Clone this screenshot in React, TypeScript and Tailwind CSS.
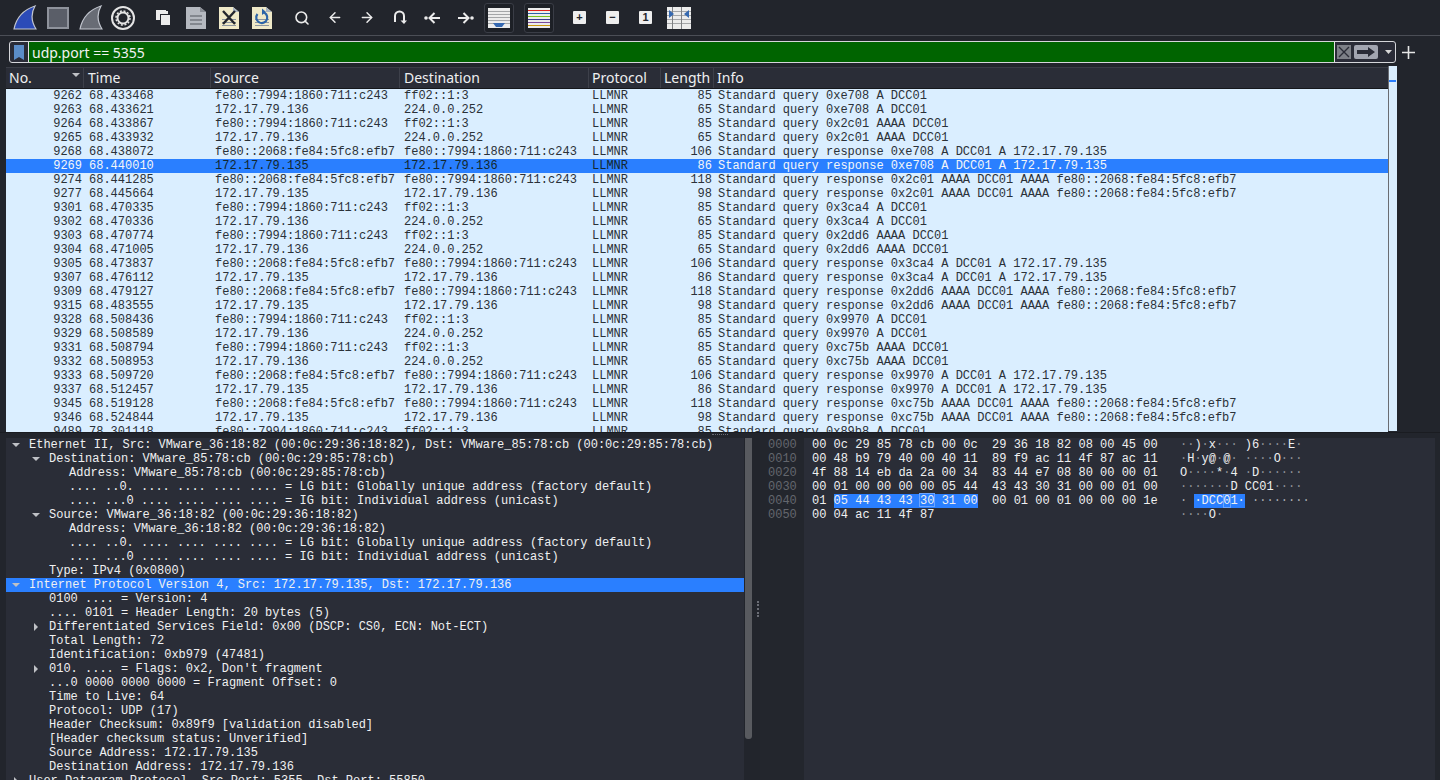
import { ArrowLeft, ArrowRight, Search } from 'lucide-react';

const mono = "font-['Liberation_Mono',monospace]";

const rows = [
  ['9262', '68.433468', 'a', '85', 'Standard query 0xe708 A DCC01'],
  ['9263', '68.433621', 'b', '65', 'Standard query 0xe708 A DCC01'],
  ['9264', '68.433867', 'a', '85', 'Standard query 0x2c01 AAAA DCC01'],
  ['9265', '68.433932', 'b', '65', 'Standard query 0x2c01 AAAA DCC01'],
  ['9268', '68.438072', 'c', '106', 'Standard query response 0xe708 A DCC01 A 172.17.79.135'],
  ['9269', '68.440010', 'd', '86', 'Standard query response 0xe708 A DCC01 A 172.17.79.135'],
  ['9274', '68.441285', 'c', '118', 'Standard query response 0x2c01 AAAA DCC01 AAAA fe80::2068:fe84:5fc8:efb7'],
  ['9277', '68.445664', 'd', '98', 'Standard query response 0x2c01 AAAA DCC01 AAAA fe80::2068:fe84:5fc8:efb7'],
  ['9301', '68.470335', 'a', '85', 'Standard query 0x3ca4 A DCC01'],
  ['9302', '68.470336', 'b', '65', 'Standard query 0x3ca4 A DCC01'],
  ['9303', '68.470774', 'a', '85', 'Standard query 0x2dd6 AAAA DCC01'],
  ['9304', '68.471005', 'b', '65', 'Standard query 0x2dd6 AAAA DCC01'],
  ['9305', '68.473837', 'c', '106', 'Standard query response 0x3ca4 A DCC01 A 172.17.79.135'],
  ['9307', '68.476112', 'd', '86', 'Standard query response 0x3ca4 A DCC01 A 172.17.79.135'],
  ['9309', '68.479127', 'c', '118', 'Standard query response 0x2dd6 AAAA DCC01 AAAA fe80::2068:fe84:5fc8:efb7'],
  ['9315', '68.483555', 'd', '98', 'Standard query response 0x2dd6 AAAA DCC01 AAAA fe80::2068:fe84:5fc8:efb7'],
  ['9328', '68.508436', 'a', '85', 'Standard query 0x9970 A DCC01'],
  ['9329', '68.508589', 'b', '65', 'Standard query 0x9970 A DCC01'],
  ['9331', '68.508794', 'a', '85', 'Standard query 0xc75b AAAA DCC01'],
  ['9332', '68.508953', 'b', '65', 'Standard query 0xc75b AAAA DCC01'],
  ['9333', '68.509720', 'c', '106', 'Standard query response 0x9970 A DCC01 A 172.17.79.135'],
  ['9337', '68.512457', 'd', '86', 'Standard query response 0x9970 A DCC01 A 172.17.79.135'],
  ['9345', '68.519128', 'c', '118', 'Standard query response 0xc75b AAAA DCC01 AAAA fe80::2068:fe84:5fc8:efb7'],
  ['9346', '68.524844', 'd', '98', 'Standard query response 0xc75b AAAA DCC01 AAAA fe80::2068:fe84:5fc8:efb7'],
  ['9489', '78.301118', 'a', '85', 'Standard query 0x89b8 A DCC01'],
];

const endpoints: Record<string, [string, string]> = {
  a: ['fe80::7994:1860:711:c243', 'ff02::1:3'],
  b: ['172.17.79.136', '224.0.0.252'],
  c: ['fe80::2068:fe84:5fc8:efb7', 'fe80::7994:1860:711:c243'],
  d: ['172.17.79.135', '172.17.79.136'],
};

// level: indent, arrow: d = open, r = closed
const details: { text: string; level: number; arrow?: 'd' | 'r'; selected?: boolean }[] = [
  { text: 'Ethernet II, Src: VMware_36:18:82 (00:0c:29:36:18:82), Dst: VMware_85:78:cb (00:0c:29:85:78:cb)', level: 0, arrow: 'd' },
  { text: 'Destination: VMware_85:78:cb (00:0c:29:85:78:cb)', level: 1, arrow: 'd' },
  { text: 'Address: VMware_85:78:cb (00:0c:29:85:78:cb)', level: 2 },
  { text: '.... ..0. .... .... .... .... = LG bit: Globally unique address (factory default)', level: 2 },
  { text: '.... ...0 .... .... .... .... = IG bit: Individual address (unicast)', level: 2 },
  { text: 'Source: VMware_36:18:82 (00:0c:29:36:18:82)', level: 1, arrow: 'd' },
  { text: 'Address: VMware_36:18:82 (00:0c:29:36:18:82)', level: 2 },
  { text: '.... ..0. .... .... .... .... = LG bit: Globally unique address (factory default)', level: 2 },
  { text: '.... ...0 .... .... .... .... = IG bit: Individual address (unicast)', level: 2 },
  { text: 'Type: IPv4 (0x0800)', level: 1 },
  { text: 'Internet Protocol Version 4, Src: 172.17.79.135, Dst: 172.17.79.136', level: 0, arrow: 'd', selected: true },
  { text: '0100 .... = Version: 4', level: 1 },
  { text: '.... 0101 = Header Length: 20 bytes (5)', level: 1 },
  { text: 'Differentiated Services Field: 0x00 (DSCP: CS0, ECN: Not-ECT)', level: 1, arrow: 'r' },
  { text: 'Total Length: 72', level: 1 },
  { text: 'Identification: 0xb979 (47481)', level: 1 },
  { text: "010. .... = Flags: 0x2, Don't fragment", level: 1, arrow: 'r' },
  { text: '...0 0000 0000 0000 = Fragment Offset: 0', level: 1 },
  { text: 'Time to Live: 64', level: 1 },
  { text: 'Protocol: UDP (17)', level: 1 },
  { text: 'Header Checksum: 0x89f9 [validation disabled]', level: 1 },
  { text: '[Header checksum status: Unverified]', level: 1 },
  { text: 'Source Address: 172.17.79.135', level: 1 },
  { text: 'Destination Address: 172.17.79.136', level: 1 },
  { text: 'User Datagram Protocol, Src Port: 5355, Dst Port: 55850', level: 0, arrow: 'r' },
];

const hexRows = [
  ['0000', '00 0c 29 85 78 cb 00 0c  29 36 18 82 08 00 45 00', '··)·x··· )6····E·'],
  ['0010', '00 48 b9 79 40 00 40 11  89 f9 ac 11 4f 87 ac 11', '·H·y@·@· ····O···'],
  ['0020', '4f 88 14 eb da 2a 00 34  83 44 e7 08 80 00 00 01', 'O····*·4 ·D······'],
  ['0030', '00 01 00 00 00 00 05 44  43 43 30 31 00 00 01 00', '·······D CC01····'],
  ['0050', '00 04 ac 11 4f 87', '····O·'],
];

function Fin({ color }: { color: string }) {
  return (
    <svg width="24" height="26" viewBox="0 0 24 26">
      <path d="M1 24 C3 14 10 5 22 1 C18 8 18 16 23 24 Z" fill={color} stroke="#c3c7d0" strokeWidth="1.2" />
    </svg>
  );
}

function Gear() {
  return (
    <svg width="24" height="24" viewBox="0 0 24 24" fill="none">
      <circle cx="12" cy="12" r="11" stroke="#e4e4e4" strokeWidth="2" />
      <circle cx="12" cy="12" r="5.5" stroke="#e4e4e4" strokeWidth="2" />
      <circle cx="12" cy="12" r="7" stroke="#e4e4e4" strokeWidth="1.5" strokeDasharray="2 1.7" />
    </svg>
  );
}

function PaperFile({ children }: { children?: React.ReactNode }) {
  return (
    <svg width="20" height="24" viewBox="0 0 20 24">
      <path d="M0 1 H14 L20 6 V23 H0 Z" fill="#efe9c8" />
      <path d="M14 1 L20 6 H14 Z" fill="#a9b4c0" />
      <g fill="#8d96a0">
        <rect x="3" y="13" width="14" height="1" />
        <rect x="3" y="16" width="14" height="1" />
        <rect x="3" y="19" width="14" height="1" />
      </g>
      {children}
    </svg>
  );
}

function Tool({ children, className = '' }: { children: React.ReactNode; className?: string }) {
  return <div className={`flex h-[30px] shrink-0 items-center justify-center ${className}`}>{children}</div>;
}

function Toolbar() {
  return (
    <div className="flex h-[36px] items-center border-b border-[#4b4e56] pl-[13px] pr-2">
      <Tool className="w-[24px]"><Fin color="#2c4bb8" /></Tool>
      <Tool className="ml-[9px] w-[24px]">
        <div className="h-[22px] w-[22px] border-2 border-[#8f939c] bg-[#5a5e68]" />
      </Tool>
      <Tool className="ml-[9px] w-[24px]"><Fin color="#686c75" /></Tool>
      <Tool className="ml-[8px] w-[24px]"><Gear /></Tool>
      <Tool className="ml-[21px] w-[14px]">
        <svg width="14" height="15" viewBox="0 0 14 15">
          <path d="M0 0 H10 V4 H4 V10 H0 Z" fill="#ececec" />
          <rect x="5" y="5" width="9" height="10" fill="#ececec" />
          <rect x="10" y="1" width="2" height="3" fill="#ececec" />
        </svg>
      </Tool>
      <Tool className="ml-[16px] w-[20px]">
        <svg width="20" height="24" viewBox="0 0 20 24">
          <path d="M0 1 H14 L20 6 V23 H0 Z" fill="#b4b8bf" />
          <path d="M14 1 L20 6 H14 Z" fill="#8a8e95" />
          <g fill="#83878e">
            <rect x="4" y="9" width="12" height="2" />
            <rect x="4" y="13" width="12" height="2" />
            <rect x="4" y="17" width="12" height="2" />
          </g>
        </svg>
      </Tool>
      <Tool className="ml-[13px] w-[20px]">
        <PaperFile><path d="M4 5 L16 18 M16 5 L4 18" stroke="#23262d" strokeWidth="2.4" /></PaperFile>
      </Tool>
      <Tool className="ml-[13px] w-[20px]">
        <PaperFile>
          <path d="M5.5 8 A5.5 5.5 0 1 0 10 6" stroke="#2c64a8" strokeWidth="2.2" fill="none" />
          <path d="M10 2.5 L14 6 L10 9 Z" fill="#2c64a8" />
        </PaperFile>
      </Tool>
      <Tool className="ml-[22px] w-[16px]"><Search size={16} strokeWidth={2.4} color="#ececec" /></Tool>
      <Tool className="ml-[17px] w-[16px]"><ArrowLeft size={17} strokeWidth={2.2} color="#ececec" /></Tool>
      <Tool className="ml-[16px] w-[16px]"><ArrowRight size={17} strokeWidth={2.2} color="#ececec" /></Tool>
      <Tool className="ml-[18px] w-[14px]">
        <svg width="14" height="16" viewBox="0 0 14 16" fill="none">
          <path d="M2 12 V6 A4.5 4.5 0 0 1 11 6 V11" stroke="#ececec" strokeWidth="2" />
          <path d="M7.5 10.5 H14 L11 14 Z" fill="#ececec" />
        </svg>
      </Tool>
      <Tool className="ml-[17px] w-[17px]">
        <svg width="17" height="14" viewBox="0 0 17 14" fill="none">
          <circle cx="2" cy="7" r="1.8" fill="#ececec" />
          <path d="M16 7 H6 M10.5 2 L5.5 7 L10.5 12" stroke="#ececec" strokeWidth="2" />
        </svg>
      </Tool>
      <Tool className="ml-[16px] w-[17px]">
        <svg width="17" height="14" viewBox="0 0 17 14" fill="none">
          <circle cx="15" cy="7" r="1.8" fill="#ececec" />
          <path d="M1 7 H11 M6.5 2 L11.5 7 L6.5 12" stroke="#ececec" strokeWidth="2" />
        </svg>
      </Tool>
      <Tool className="ml-[10px] w-[30px] rounded-[3px] border border-[#3a3d46] bg-[#1d2026]">
        <svg width="22" height="20" viewBox="0 0 22 20">
          <rect width="22" height="20" fill="#ececec" />
          <g fill="#a4a6a8">
            <rect y="3" width="22" height="1" />
            <rect y="6" width="22" height="1" />
            <rect y="9" width="22" height="1" />
            <rect y="12" width="22" height="1" />
            <rect y="15" width="22" height="1" />
          </g>
          <path d="M5 15 H17 L14 19 H8 Z" fill="#3568b0" />
        </svg>
      </Tool>
      <Tool className="ml-[10px] w-[30px] rounded-[3px] border border-[#3a3d46] bg-[#1d2026]">
        <svg width="22" height="20" viewBox="0 0 22 20">
          <rect width="22" height="20" fill="#ececec" />
          <rect y="2" width="22" height="1" fill="#e0201c" />
          <rect y="5" width="22" height="1" fill="#2c5fa8" />
          <rect y="8" width="22" height="1" fill="#78c01c" />
          <rect y="11" width="22" height="1" fill="#3a3a8c" />
          <rect y="14" width="22" height="1" fill="#7a4a9c" />
          <rect y="17" width="22" height="1" fill="#c8980c" />
        </svg>
      </Tool>
      <Tool className="ml-[19px] w-[13px]"><Box glyph="+" /></Tool>
      <Tool className="ml-[20px] w-[13px]"><Box glyph="−" /></Tool>
      <Tool className="ml-[20px] w-[13px]"><Box glyph="1" /></Tool>
      <Tool className="ml-[15px] w-[24px]">
        <svg width="24" height="22" viewBox="0 0 24 22">
          <rect width="24" height="22" fill="#ececec" />
          <g fill="#a4a6a8">
            <rect y="4" width="24" height="1" />
            <rect y="8" width="24" height="1" />
            <rect y="12" width="24" height="1" />
            <rect y="16" width="24" height="1" />
          </g>
          <rect x="5" width="1" height="22" fill="#7f8184" />
          <rect x="14" width="1" height="22" fill="#7f8184" />
          <path d="M2 3 L7 7 L2 11 Z M22 3 L17 7 L22 11 Z" fill="#3568b0" />
        </svg>
      </Tool>
    </div>
  );
}

function Box({ glyph }: { glyph: string }) {
  return (
    <div className="flex h-[13px] w-[13px] items-center justify-center rounded-[1px] bg-[#eeeeee] font-['Liberation_Sans',sans-serif] text-[11px] font-bold leading-none text-[#23262d]">
      {glyph}
    </div>
  );
}

function FilterBar() {
  return (
    <div className="flex h-[31px] items-center pl-[9px] pr-[1px] pt-[1px]">
      <div className="flex h-[22px] w-[1387px] items-stretch overflow-hidden rounded-[3px] border border-[#d5d6da] bg-[#2a2c37]">
        <div className="flex w-[18px] shrink-0 items-center justify-center">
          <svg width="10" height="15" viewBox="0 0 10 15"><path d="M0 0 H10 V15 L5 12 L0 15 Z" fill="#5b8dc8" /></svg>
        </div>
        <div className="flex flex-1 items-center border-x border-[#e4e4e4] bg-[#006400] pl-[3px] font-['Noto_Sans',sans-serif] text-[14px] text-[#f2f2f2]">
          udp.port == 5355
        </div>
        <div className="flex w-[60px] shrink-0 items-center gap-[3px] pl-[2px]">
          <div className="flex h-[14px] w-[14px] items-center justify-center bg-[#7d8087]">
            <svg width="12" height="12" viewBox="0 0 12 12"><path d="M1 1 L11 11 M11 1 L1 11" stroke="#2a2c37" strokeWidth="1.4" /></svg>
          </div>
          <div className="flex h-[14px] w-[24px] items-center justify-center rounded-[2px] bg-[#a2a5b0]">
            <svg width="18" height="10" viewBox="0 0 18 10"><path d="M0 3 H11 V0 L18 5 L11 10 V7 H0 Z" fill="#2a2c37" /></svg>
          </div>
          <svg className="ml-[4px]" width="7" height="4" viewBox="0 0 7 4"><path d="M0 0 H7 L3.5 4 Z" fill="#d8d8d8" /></svg>
        </div>
      </div>
      <div className="ml-[6px] flex w-[13px] items-center justify-center">
        <svg width="13" height="13" viewBox="0 0 13 13"><path d="M6.5 0 V13 M0 6.5 H13" stroke="#e6e6e6" strokeWidth="1.6" /></svg>
      </div>
    </div>
  );
}

const colClass = ['w-[78px]', 'w-[127px]', 'w-[189px]', 'w-[189px]', 'w-[72px]', 'w-[53px]'];

function PacketList() {
  return (
    <div className="flex h-[366px] border-b border-[#1a1c21] pl-[6px] pr-[5px]">
      <div className="w-[1382px] shrink-0 overflow-hidden">
        <div className="flex h-[22px] items-center border-y border-t-[#3a3d46] border-b-[#16181c] bg-[#2a2d37] font-['Noto_Sans',sans-serif] text-[14px] leading-[20px] text-[#eff0f1]">
          <div className={`${colClass[0]} relative h-full border-r border-[#3d404a] pl-[3px]`}>
            No.
            <svg className="absolute right-[3px] top-[5px]" width="8" height="4" viewBox="0 0 8 4"><path d="M0 0 H8 L4 4 Z" fill="#bfc1c6" /></svg>
          </div>
          <div className={`${colClass[1]} h-full border-r border-[#3d404a] pl-[4px]`}>Time</div>
          <div className={`${colClass[2]} h-full border-r border-[#3d404a] pl-[3px]`}>Source</div>
          <div className={`${colClass[3]} h-full border-r border-[#3d404a] pl-[4px]`}>Destination</div>
          <div className={`${colClass[4]} h-full border-r border-[#3d404a] pl-[3px]`}>Protocol</div>
          <div className={`${colClass[5]} h-full border-r border-[#3d404a] pl-[3px]`}>Length</div>
          <div className="h-full flex-1 pl-[3px]">Info</div>
        </div>
        <div className={`${mono} bg-[#daeeff] text-[12px] leading-[14px] text-[#2a3138]`}>
          {rows.map((r) => {
            const selected = r[0] === '9269';
            const [src, dst] = endpoints[r[2]];
            return (
              <div key={r[0]} className={`flex h-[14px] whitespace-pre ${selected ? 'bg-[#2a7fff] text-[#f4f6f8]' : ''}`}>
                <div className="w-[76px] shrink-0 text-right">{r[0]}</div>
                <div className="w-[126px] shrink-0 pl-[7px]">{r[1]}</div>
                <div className={`w-[189px] shrink-0 pl-[7px] ${selected ? 'text-[#12272e]' : ''}`}>{src}</div>
                <div className={`w-[189px] shrink-0 pl-[7px] ${selected ? 'text-[#12272e]' : ''}`}>{dst}</div>
                <div className={`w-[74px] shrink-0 pl-[6px] ${selected ? 'text-[#12272e]' : ''}`}>LLMNR</div>
                <div className="w-[52px] shrink-0 text-right">{r[3]}</div>
                <div className="pl-[6px]">{r[4]}</div>
              </div>
            );
          })}
        </div>
      </div>
      <div className="relative mb-[1px] mt-[-1px] w-[9px] shrink-0 border-x border-x-[#6a6c72] border-r-transparent bg-[#daeeff]">
        <div className="absolute left-0 right-0 top-[14px] h-[2px] bg-[#2a7fff]" />
      </div>
    </div>
  );
}

function DetailsPane() {
  return (
    <div className="flex w-[745px] shrink-0 overflow-hidden pl-[6px]">
      <div className={`${mono} w-[738px] shrink-0 bg-[#2a2d37] text-[12px] leading-[14px] text-[#eff0f1]`}>
        {details.map((d, i) => (
          <div
            key={i}
            className={`flex h-[14px] items-center whitespace-pre ${d.selected ? 'bg-[#2a7fff]' : ''}`}
          >
            <span className={`flex w-[10px] shrink-0 items-center justify-center ${d.level === 0 ? 'ml-[5px]' : 'ml-[25px]'}`}>
              {d.arrow === 'd' && <svg width="8" height="4" viewBox="0 0 8 4"><path d="M0 0 H8 L4 4 Z" fill="#bfc1c6" /></svg>}
              {d.arrow === 'r' && <svg width="4" height="8" viewBox="0 0 4 8"><path d="M0 0 V8 L4 4 Z" fill="#bfc1c6" /></svg>}
            </span>
            <span className={d.level === 0 ? 'ml-[8px]' : d.level === 1 ? 'ml-[8px]' : 'ml-[28px]'}>{d.text}</span>
          </div>
        ))}
      </div>
    </div>
  );
}

function BytesPane() {
  return (
    <div className={`${mono} flex min-w-0 flex-1 text-[12px] leading-[14px] text-[#eff0f1]`}>
      <div className="w-[44px] shrink-0 bg-[#23262d] pl-[8px] text-[#63666d]">
        {['0000', '0010', '0020', '0030', '0040', '0050'].map((o) => <div key={o} className="h-[14px]">{o}</div>)}
      </div>
      <div className="min-w-0 flex-1 bg-[#2a2d37] pl-[8px]">
        {hexRows.slice(0, 4).map((h) => <HexLine key={h[0]} hex={h[1]} ascii={h[2]} />)}
        <div className="flex h-[14px] whitespace-pre">
          <span className="w-[368px] shrink-0">
            01 <span className="relative bg-[#2a7fff]">05 44 43 43 <span className="relative">30<span className="absolute left-[-1px] top-[-1px] h-[14px] w-[16px] border border-[#6ca5ff]" /></span> 31 00</span>  00 01 00 01 00 00 00 1e
          </span>
          <span className="text-[#a9acb2]">
            · <span className="bg-[#2a7fff] text-[#eff0f1]">·DCC<span className="relative">0<span className="absolute left-0 top-0 h-[14px] w-[8px] border border-[#6ca5ff]" /></span>1·</span> ········
          </span>
        </div>
        <HexLine hex={hexRows[4][1]} ascii={hexRows[4][2]} />
      </div>
    </div>
  );
}

function HexLine({ hex, ascii }: { hex: string; ascii: string }) {
  return (
    <div className="flex h-[14px] whitespace-pre">
      <span className="w-[368px] shrink-0">{hex}</span>
      <span>
        {ascii.split('').map((c, i) => (
          <span key={i} className={c === '·' ? 'text-[#8d9096]' : ''}>{c}</span>
        ))}
      </span>
    </div>
  );
}

export default function App() {
  return (
    <div className="h-[780px] w-[1440px] overflow-hidden bg-[#22252c]">
      <Toolbar />
      <FilterBar />
      <PacketList />
      <div className="flex h-[4px] items-center justify-center">
        <div className="h-[2px] w-[16px] border-t border-dotted border-[#6a6d75]" />
      </div>
      <div className="flex h-[343px] pr-[5px] pt-[1px]">
        <DetailsPane />
        <div className="mr-[4px] w-[7px] shrink-0 pb-[28px]">
          <div className="h-[301px] rounded-b-[3px] bg-[#585a5f]" />
        </div>
        <div className="flex w-[4px] shrink-0 items-center justify-center">
          <div className="h-[16px] w-[2px] border-l-2 border-dotted border-[#6a6d75]" />
        </div>
        <BytesPane />
      </div>
    </div>
  );
}
